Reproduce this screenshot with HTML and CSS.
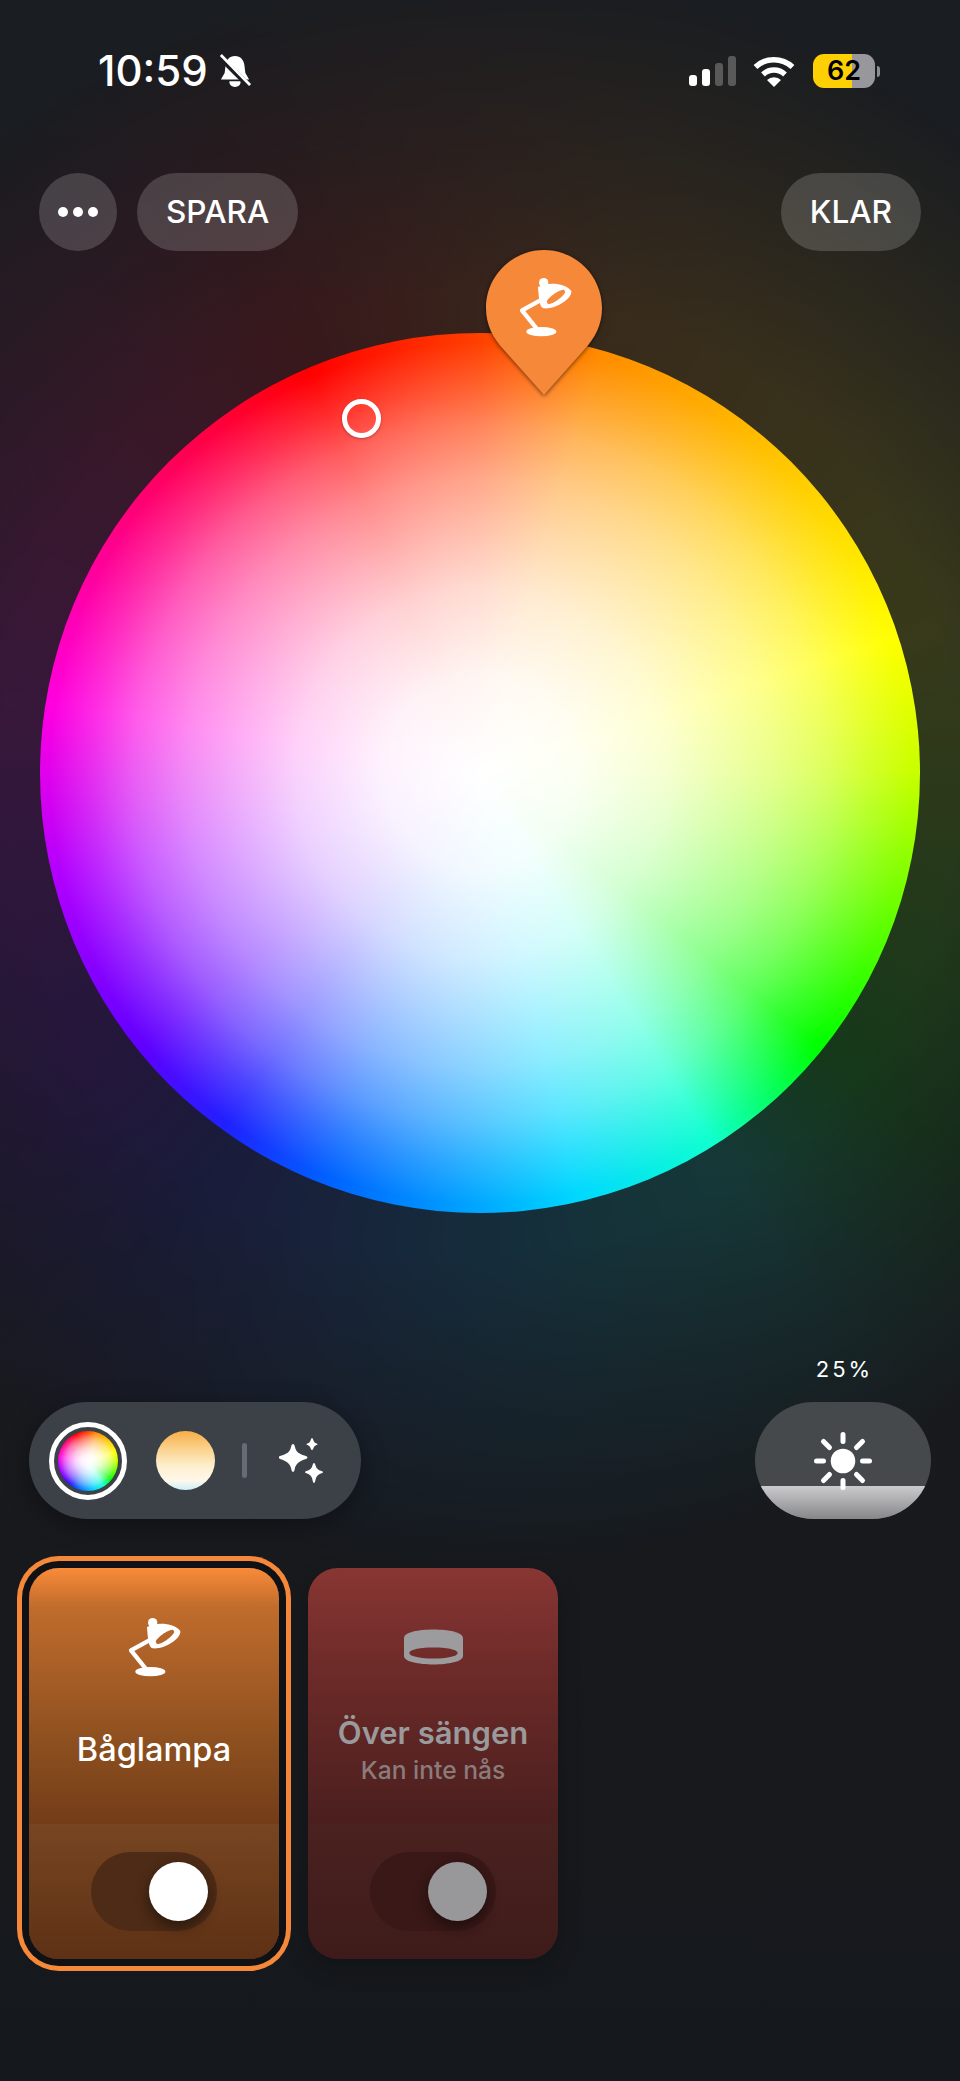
FILE: index.html
```html
<!DOCTYPE html>
<html lang="sv">
<head>
<meta charset="utf-8">
<title>Färgval</title>
<link rel="stylesheet" href="styles.css">
</head>
<body>
<svg class="defs" width="0" height="0" aria-hidden="true">
  <symbol id="lamp" viewBox="385 228 165 180">
    <circle cx="462" cy="245" r="14"/>
    <path fill-rule="evenodd" d="M445 258C470 243 525 243 545 270C548 292 500 325 462 322C450 322 447 290 445 258ZM473 305A32 9 -35 1 1 525 270A32 9 -35 1 1 473 305Z"/>
    <path class="lamp-arm" d="M456 296L397 328L442 384"/>
    <ellipse cx="455" cy="392" rx="45" ry="14"/>
  </symbol>
</svg>

<div class="screen">
  <div class="glow"></div>

  <header class="status">
    <div class="status-left">
      <span class="clock">10:59</span>
      <svg class="bell" viewBox="0 0 34 36">
        <path d="M17 2c6 0 9.500 4.500 10 10l1 8 4 7H2l4-7 1-8C7.500 6.500 11 2 17 2Z"/>
        <path d="M11 29h12c0 4-2.500 6-6 6s-6-2-6-6Z"/>
        <path class="bell-gap" d="M1 3l32 32"/>
        <path class="bell-slash" d="M2 1l31 32"/>
      </svg>
    </div>
    <div class="status-right">
      <div class="signal">
        <i class="bar bar1"></i><i class="bar bar2"></i><i class="bar bar3"></i><i class="bar bar4"></i>
      </div>
      <svg class="wifi" viewBox="0 0 42 31">
        <path class="wifi-arc" d="M2.500 11A27 27 0 0 1 39.500 11"/>
        <path class="wifi-arc" d="M10 18.500A16 16 0 0 1 32 18.500"/>
        <path d="M14 24A10 10 0 0 1 28 24L21 31Z"/>
      </svg>
      <div class="battery"><span class="battery-level">62</span></div>
      <i class="battery-nub"></i>
    </div>
  </header>

  <nav class="toolbar">
    <div class="toolbar-group">
      <button class="chip chip-round" aria-label="Mer"><i></i><i></i><i></i></button>
      <button class="chip">SPARA</button>
    </div>
    <button class="chip">KLAR</button>
  </nav>

  <section class="wheel-wrap">
    <div class="wheel"></div>
    <i class="picker"></i>
    <svg class="pin" viewBox="0 0 118 147">
      <path class="pin-body" d="M59 1C91 1 117 27 117 59C117 76 110 89 99 101L59 146L19 101C8 89 1 76 1 59C1 27 27 1 59 1Z"/>
      <use href="#lamp" class="lamp-white" x="33" y="28" width="55" height="60"/>
    </svg>
  </section>

  <section class="controls">
    <div class="modes">
      <div class="mode-ring"><div class="mini-wheel"></div></div>
      <div class="mode-warm"></div>
      <i class="mode-divider"></i>
      <svg class="sparkles" viewBox="0 0 44 45">
        <path d="M14 6C15 6 15.500 7 16 9C17 14 20 16 27 18C29 19 29 20 27 21C20 23 17 26 16 30C15.500 33 14.500 34 14 34C13.500 34 12.500 33 12 30C11 26 8 23 1 21C-1 20 -1 19 1 18C8 16 11 14 12 9C12.500 7 13 6 14 6Z"/>
        <path d="M33 0C33.500 0 34 1 34.500 2.500C35 4 36 5 37.500 5.500C39 6 39 6.500 37.500 7C36 7.500 35 8.500 34.500 10C34 11.500 33.500 12 33 12C32.500 12 32 11.500 31.500 10C31 8.500 30 7.500 28.500 7C27 6.500 27 6 28.500 5.500C30 5 31 4 31.500 2.500C32 1 32.500 0 33 0Z"/>
        <path d="M35 25C35.700 25 36.200 26 36.700 28C37.500 30.500 39 32 42.500 33C44.500 33.800 44.500 34.600 42.500 35.200C39 36.200 37.500 38 36.700 41C36.200 43.500 35.700 45 35 45C34.300 45 33.800 43.500 33.300 41C32.500 38 31 36.200 27.500 35.200C25.500 34.600 25.500 33.800 27.500 33C31 32 32.500 30.500 33.300 28C33.800 26 34.300 25 35 25Z"/>
      </svg>
    </div>
    <div class="brightness-col">
      <span class="brightness-value">25%</span>
      <div class="brightness">
        <svg class="sun" viewBox="0 0 60 60">
          <circle cx="30" cy="30" r="12.300"/>
          <path class="sun-rays" d="M30 3.500V10.500M30 49.500V56.500M3.500 30H10.500M49.500 30H56.500M10.500 10.500L16.500 16.500M43.500 43.500L49.500 49.500M49.500 10.500L43.500 16.500M16.500 43.500L10.500 49.500"/>
        </svg>
      </div>
    </div>
  </section>

  <section class="cards">
    <article class="card card-active">
      <div class="card-top">
        <svg class="card-icon lamp-white"><use href="#lamp"/></svg>
        <div class="card-text"><span class="card-title card-title-on">Båglampa</span></div>
      </div>
      <div class="card-bottom">
        <div class="toggle"><i class="knob"></i></div>
      </div>
    </article>
    <article class="card card-offline">
      <div class="card-top">
        <svg class="card-icon" viewBox="342 268 178 102" preserveAspectRatio="xMidYMid meet">
          <path class="ceiling" fill-rule="evenodd" d="M342 292C342 258 520 258 520 292V346C520 380 342 380 342 346ZM358 337C358 359 504 359 504 337C504 315 358 315 358 337Z"/>
        </svg>
        <div class="card-text">
          <span class="card-title">Över sängen</span>
          <span class="card-sub">Kan inte nås</span>
        </div>
      </div>
      <div class="card-bottom">
        <div class="toggle"><i class="knob"></i></div>
      </div>
    </article>
  </section>
</div>
</body>
</html>
```

FILE: styles.css
```css
* { box-sizing: border-box; }

html, body {
  margin: 0;
  padding: 0;
  background: #17191d;
}

body {
  font-family: Inter, "Liberation Sans", sans-serif;
  color: #fff;
}

.defs { position: absolute; }

.screen {
  position: relative;
  width: 960px;
  height: 2081px;
  padding-top: 54px;
  overflow: hidden;
  background: linear-gradient(#1a1d21 0, #191a1e 60%, #15181c 100%);
}

/* coloured light thrown by the wheel onto the dark backdrop */
.glow {
  position: absolute;
  inset: 0 0 auto 0;
  height: 1700px;
  opacity: .13;
  background: conic-gradient(from -23deg at 480px 773px,
    #f00 0deg, #ff8c00 39deg, #ff0 95deg, #0f0 152deg, #0fd 171deg, #0af 203deg, #22f 239deg, #60f 254deg, #f0e 302deg, #f04 345deg, #f00 360deg);
  -webkit-mask-image: radial-gradient(circle 800px at 480px 773px, #000 60%, rgba(0,0,0,.6) 75%, transparent 100%);
  mask-image: radial-gradient(circle 800px at 480px 773px, #000 60%, rgba(0,0,0,.6) 75%, transparent 100%);
}

/* status bar */
.status {
  position: relative;
  display: flex;
  justify-content: space-between;
  align-items: center;
  height: 34px;
  padding: 0 80px 0 98px;
}

.status-left { display: flex; align-items: center; gap: 11px; }

.clock {
  font-size: 42px;
  font-weight: 500;
  line-height: 34px;
}

.bell { width: 32px; height: 34px; fill: #fff; }
.bell-gap { fill: none; stroke: #1a1c20; stroke-width: 6; }
.bell-slash { fill: none; stroke: #fff; stroke-width: 3; }

.status-right { display: flex; align-items: center; }

.signal { display: flex; align-items: flex-end; gap: 5px; height: 30px; margin-right: 17px; }
.bar { display: block; width: 8px; border-radius: 3px; background: #fff; }
.bar1 { height: 11px; }
.bar2 { height: 17px; }
.bar3 { height: 23px; background: #595959; }
.bar4 { height: 30px; background: #595959; }

.wifi { width: 42px; height: 31px; margin-right: 18px; fill: #fff; }
.wifi-arc { fill: none; stroke: #fff; stroke-width: 5.500; }

.battery {
  width: 62px;
  height: 34px;
  border-radius: 11px;
  background: linear-gradient(90deg, #fdd003 63%, #98989c 63%);
  display: flex;
  align-items: center;
  justify-content: center;
}
.battery-level {
  color: #000;
  font-size: 27px;
  font-weight: 600;
  line-height: 34px;
}
.battery-nub {
  width: 3px;
  height: 11px;
  margin-left: 2px;
  border-radius: 0 3px 3px 0;
  background: #8e8e90;
}

/* top actions */
.toolbar {
  position: relative;
  display: flex;
  justify-content: space-between;
  margin-top: 85px;
  padding: 0 39px;
}
.toolbar-group { display: flex; gap: 20px; }

.chip {
  height: 78px;
  min-width: 140px;
  padding: 0 29px;
  border: 0;
  border-radius: 39px;
  background: rgba(255,255,255,.17);
  color: #fff;
  font: 500 31.500px/78px Inter, "Liberation Sans", sans-serif;
}
.chip-round {
  min-width: 0;
  width: 78px;
  padding: 0;
  display: flex;
  align-items: center;
  justify-content: center;
  gap: 5px;
}
.chip-round i { width: 10px; height: 10px; border-radius: 50%; background: #fff; }

/* colour wheel */
.wheel-wrap {
  position: relative;
  width: 880px;
  height: 880px;
  margin: 82px 0 0 40px;
}

.wheel, .mini-wheel {
  border-radius: 50%;
  background:
    radial-gradient(closest-side, #fff 0, rgba(255,255,255,.95) 22%, rgba(255,255,255,.82) 42%, rgba(255,255,255,.68) 55%, rgba(255,255,255,.54) 67%, rgba(255,255,255,.36) 79%, rgba(255,255,255,.18) 88%, transparent 98%),
    conic-gradient(from -23deg, #f00 0deg, #ff4000 23deg, #ff8c00 39deg, #ff0 95deg, #c8ff00 113deg, #0f0 152deg, #10ffd0 171deg, #00d8ff 190deg, #00a8ff 203deg, #0060ff 224deg, #2020ff 239deg, #6000ff 254deg, #b000ff 279deg, #ff00e0 302deg, #ff0090 324deg, #ff0040 345deg, #f00 360deg);
}
.wheel { width: 100%; height: 100%; }

.picker {
  position: absolute;
  left: 302px;
  top: 66px;
  width: 39px;
  height: 39px;
  border: 5px solid #fff;
  border-radius: 50%;
  box-shadow: 0 1px 3px rgba(0,0,0,.3);
}

.pin {
  position: absolute;
  left: 445px;
  top: -84px;
  width: 118px;
  height: 147px;
  filter: drop-shadow(0 1px 2px rgba(0,0,0,.6));
}
.pin-body { fill: #f6883a; }

.lamp-white { fill: #fff; stroke: none; }
.lamp-arm { fill: none; stroke: #fff; stroke-width: 13; stroke-linejoin: round; stroke-linecap: round; }

/* mode switcher and brightness */
.controls {
  position: relative;
  display: flex;
  justify-content: space-between;
  align-items: flex-end;
  margin-top: 145px;
  padding: 0 29px;
}

.modes {
  display: flex;
  align-items: center;
  width: 332px;
  height: 117px;
  padding-left: 20px;
  border-radius: 59px;
  background: #3c4047;
  box-shadow: 0 6px 24px rgba(0,0,0,.35);
}
.mode-ring {
  width: 78px;
  height: 78px;
  padding: 4px;
  border: 5px solid #fff;
  border-radius: 50%;
}
.mini-wheel { width: 100%; height: 100%; }
.mode-warm {
  width: 59px;
  height: 59px;
  margin-left: 29px;
  border-radius: 50%;
  background: linear-gradient(#f7ae47 0, #fbd28c 30%, #fdeecb 58%, #fff8ea 84%, #cdeefb 100%);
}
.mode-divider {
  width: 5px;
  height: 35px;
  margin-left: 27px;
  border-radius: 3px;
  background: #676c74;
}
.sparkles { width: 44px; height: 45px; margin-left: 32px; fill: #fff; }

.brightness-col { display: flex; flex-direction: column; align-items: center; gap: 22px; }
.brightness-value { padding-left: 3px; font-size: 22px; line-height: 22px; letter-spacing: 3px; font-weight: 400; }

.brightness {
  position: relative;
  display: flex;
  align-items: center;
  justify-content: center;
  width: 176px;
  height: 117px;
  border-radius: 59px;
  overflow: hidden;
  background: #45494c;
}
.brightness::after {
  content: "";
  position: absolute;
  left: 0;
  right: 0;
  bottom: 0;
  height: 33px;
  background: linear-gradient(#cbcbce, #87878a);
}
.sun { position: relative; z-index: 1; width: 60px; height: 60px; fill: #fff; }
.sun-rays { fill: none; stroke: #fff; stroke-width: 5; stroke-linecap: round; }

/* light cards */
.cards {
  position: relative;
  display: flex;
  gap: 29px;
  margin-top: 49px;
  padding-left: 29px;
}

.card {
  display: flex;
  flex-direction: column;
  width: 250px;
  height: 391px;
  border-radius: 30px;
  overflow: hidden;
}
.card-active {
  overflow: visible;
  background: linear-gradient(#f98b39 0, #c06c2c 10%, #8c4f1f 45%, #733d18 65.500%, #774521 65.600%, #5e3115 100%);
  box-shadow: 0 0 0 7px #0f1114, 0 0 0 12px #f6883a;
}
.card-offline {
  background: linear-gradient(#883633 0, #6e2b29 25%, #4a1f1e 65.500%, #4a2220 65.600%, #3e1b1a 100%);
  box-shadow: 0 8px 24px rgba(0,0,0,.2);
}

.card-top {
  display: flex;
  flex-direction: column;
  align-items: center;
  height: 256px;
  padding-top: 49px;
}
.card-icon { width: 55px; height: 60px; flex: none; }
.card-offline .card-icon { width: 59px; }
.ceiling { fill: #9c9c9e; }

.card-text {
  flex: 1;
  display: flex;
  flex-direction: column;
  align-items: center;
  justify-content: center;
  padding-bottom: 2px;
}
.card-title { font-size: 31px; line-height: 40px; font-weight: 600; color: #9a9a9c; }
.card-title-on { font-size: 32.500px; color: #fff; font-weight: 500; }
.card-sub { font-size: 24.600px; line-height: 34px; font-weight: 500; color: #8b7b7b; }

.card-bottom {
  display: flex;
  align-items: center;
  justify-content: center;
  flex: 1;
}

.toggle {
  display: flex;
  justify-content: flex-end;
  align-items: center;
  width: 126px;
  height: 79px;
  padding-right: 9px;
  border-radius: 40px;
  background: #4d2b16;
}
.knob {
  width: 59px;
  height: 59px;
  border-radius: 50%;
  background: #fff;
  box-shadow: 0 6px 14px rgba(0,0,0,.45);
}
.card-offline .toggle { background: #391817; }
.card-offline .knob { background: #98989a; }
```
